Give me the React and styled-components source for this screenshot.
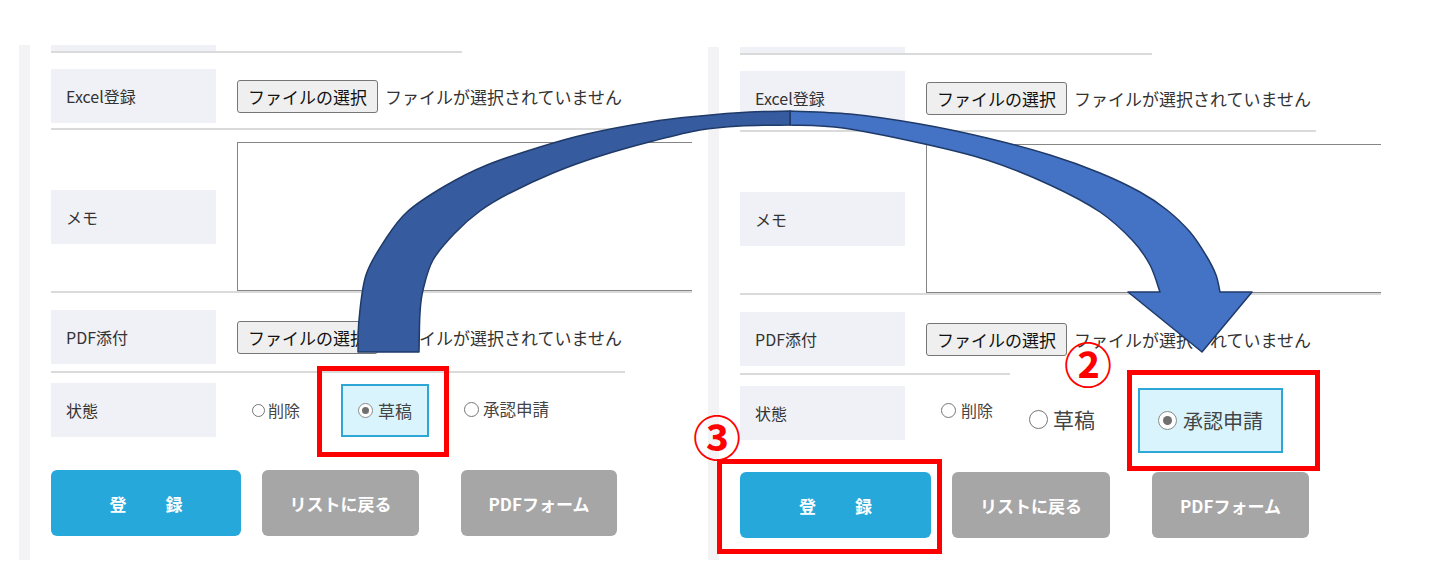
import React from 'react';
import styled, { createGlobalStyle } from 'styled-components';

const GlobalStyle = createGlobalStyle`
  html, body { margin: 0; padding: 0; background: #fff; }
  body { font-family: "Noto Sans CJK JP", "Noto Sans", sans-serif; color: #333; }
  * { box-sizing: border-box; }
`;

const Stage = styled.main`
  position: relative;
  width: 1448px;
  height: 587px;
  overflow: hidden;
  display: flex;
  align-items: flex-start;
  gap: 16px;
  padding-left: 19px;
`;

const Panel = styled.section`
  flex: none;
  width: 673px;
  height: ${p => p.$h}px;
  margin-top: ${p => p.$top}px;
  display: flex;
`;

const Strip = styled.div`
  flex: none;
  width: 11px;
  background: #f3f3f5;
`;

const Form = styled.div`
  flex: 1;
  min-width: 0;
  margin-left: 21px;
  display: flex;
  flex-direction: column;
`;

const Row = styled.div`
  display: flex;
  align-items: ${p => p.$align || 'center'};
  gap: 21px;
  padding: ${p => p.$pad || '0'};
  height: ${p => (p.$h ? `${p.$h}px` : 'auto')};
  flex: none;
`;

const Label = styled.div`
  flex: none;
  width: 165px;
  height: ${p => p.$h ?? 54}px;
  margin-top: ${p => p.$mt || 0}px;
  padding-left: 15px;
  display: flex;
  align-items: center;
  background: #f0f1f6;
  font-size: 16px;
  color: #333;
`;

const Divider = styled.div`
  flex: none;
  height: 2px;
  width: ${p => (p.$w ? `${p.$w}px` : '100%')};
  background: #dadada;
`;

const FileField = styled.div`
  flex: none;
  display: flex;
  align-items: center;
  gap: 7px;
  white-space: nowrap;
`;

const FileButton = styled.button`
  height: 33px;
  padding: 0 10px;
  border: 1px solid #767676;
  border-radius: 3px;
  background: #efefef;
  font-family: inherit;
  font-size: 17px;
  color: #111;
`;

const FileStatus = styled.span`
  font-size: 17px;
  color: #333;
`;

const Memo = styled.textarea`
  flex: 1;
  min-width: 0;
  display: block;
  margin: 0;
  height: 149px;
  border: 1px solid #858585;
  border-right: none;
  border-radius: 0;
  background: #fff;
  resize: none;
`;

const Radio = styled.span`
  flex: none;
  width: ${p => p.$size}px;
  height: ${p => p.$size}px;
  border-radius: 50%;
  border: ${p => (p.$checked ? '1.5px solid #8a8a8a' : '1px solid #767676')};
  background: #fff;
  display: inline-flex;
  align-items: center;
  justify-content: center;
  &::after {
    content: '';
    display: ${p => (p.$checked ? 'block' : 'none')};
    width: 55%;
    height: 55%;
    border-radius: 50%;
    background: #6f6f6f;
  }
`;

const Option = styled.label`
  flex: none;
  display: inline-flex;
  align-items: center;
  gap: ${p => p.$gap ?? 3}px;
  font-size: ${p => p.$fs}px;
  line-height: ${p => p.$fs + 8}px;
  color: #444;
  margin-top: ${p => p.$mt || 0}px;
  margin-left: ${p => p.$ml || 0}px;
`;

const SelectedBox = styled.div`
  position: relative;
  flex: none;
  display: flex;
  align-items: center;
  justify-content: center;
  gap: ${p => p.$gap}px;
  width: ${p => p.$w}px;
  height: ${p => p.$h}px;
  margin-top: ${p => p.$mt}px;
  margin-left: ${p => p.$ml}px;
  background: #d9f4fd;
  border: 2px solid #2ea6d6;
  font-size: ${p => p.$fs}px;
  color: #444;
  &::after {
    content: '';
    position: absolute;
    inset: ${p => p.$frame};
    border: 5px solid #ff0000;
    pointer-events: none;
  }
`;

const ButtonRow = styled.div`
  flex: none;
  display: flex;
  gap: 21px;
`;

const ActionButton = styled.button`
  position: relative;
  flex: none;
  width: ${p => p.$w}px;
  height: 66px;
  margin-left: ${p => p.$ml || 0}px;
  border: none;
  border-radius: 6px;
  background: ${p => (p.$primary ? '#27a8db' : '#a6a6a6')};
  color: #fff;
  font-family: inherit;
  font-weight: 700;
  font-size: 17px;
  display: flex;
  align-items: center;
  justify-content: center;
  gap: ${p => p.$gap || 0}px;
  &::after {
    content: '';
    display: ${p => (p.$frame ? 'block' : 'none')};
    position: absolute;
    inset: ${p => p.$frame || '0'};
    border: 5px solid #ff0000;
    pointer-events: none;
  }
`;

const Mark = styled.span`
  position: absolute;
  left: ${p => p.$x}px;
  top: ${p => p.$y}px;
  font-size: 48px;
  line-height: 1;
  font-weight: 700;
  color: #ff0000;
  pointer-events: none;
`;

const ArrowLayer = styled.svg`
  position: absolute;
  left: 0;
  top: 0;
  pointer-events: none;
`;

const crSegs = pts => {
  let d = '';
  for (let i = 0; i < pts.length - 1; i++) {
    const p0 = pts[i - 1] || pts[i];
    const p1 = pts[i];
    const p2 = pts[i + 1];
    const p3 = pts[i + 2] || p2;
    const c1x = p1[0] + (p2[0] - p0[0]) / 6;
    const c1y = p1[1] + (p2[1] - p0[1]) / 6;
    const c2x = p2[0] - (p3[0] - p1[0]) / 6;
    const c2y = p2[1] - (p3[1] - p1[1]) / 6;
    d += ` C${c1x.toFixed(1)} ${c1y.toFixed(1)} ${c2x.toFixed(1)} ${c2y.toFixed(1)} ${p2[0]} ${p2[1]}`;
  }
  return d;
};

const outerLeft = [[358, 352], [359, 320], [366, 275], [385, 240], [407, 212], [445, 186], [487, 165], [540, 147], [587, 134], [650, 122], [700, 116], [750, 112], [790, 111]];
const outerRight = [[790, 111], [850, 114], [920, 124], [987, 138], [1050, 155], [1100, 173], [1140, 192], [1167, 210], [1190, 232], [1207, 257], [1216, 275], [1220, 292]];
const innerRight = [[1160, 292], [1150, 265], [1133, 241], [1100, 212], [1050, 185], [987, 160], [920, 143], [843, 128], [790, 125]];
const innerLeft = [[790, 125], [740, 126], [700, 130], [653, 141], [600, 156], [553, 173], [510, 193], [480, 211], [455, 233], [433, 260], [423, 290], [420, 313], [419, 352]];

const darkPath = `M358 352${crSegs(outerLeft)} L790 125${crSegs(innerLeft)} Z`;
const lightPath = `M790 111${crSegs(outerRight)} L1252 292 L1202 352 L1128 292 L1160 292${crSegs(innerRight)} Z`;

function CurvedArrow() {
  return (
    <ArrowLayer width="1448" height="587" viewBox="0 0 1448 587">
      <path d={lightPath} fill="#4472c4" stroke="#1f3a68" strokeWidth="1.5" strokeLinejoin="round" />
      <path d={darkPath} fill="#365b9e" stroke="#1f3a68" strokeWidth="1.5" strokeLinejoin="round" />
    </ArrowLayer>
  );
}

function FileRow({ label, pad, divider }) {
  return (
    <>
      <Row $pad={pad}>
        <Label>{label}</Label>
        <FileField>
          <FileButton type="button">ファイルの選択</FileButton>
          <FileStatus>ファイルが選択されていません</FileStatus>
        </FileField>
      </Row>
      <Divider $w={divider} />
    </>
  );
}

function TopRows({ excelLine, topLine }) {
  return (
    <>
      <Label $h={6} />
      <Divider $w={topLine} />
      <FileRow label="Excel登録" pad="16px 0 5px" divider={excelLine} />
      <Row $pad="12px 0 0">
        <Label>メモ</Label>
        <Memo />
      </Row>
      <Divider />
    </>
  );
}

function LeftPanel() {
  return (
    <Panel $top={45} $h={515}>
      <Strip />
      <Form>
        <TopRows topLine={411} />
        <FileRow label="PDF添付" pad="17px 0 7px" divider={574} />
        <Row $align="flex-start" $h={97}>
          <Label $mt={10}>状態</Label>
          <Option $fs={16} $ml={15} $mt={25}>
            <Radio $size={13} />削除
          </Option>
          <SelectedBox $w={88} $h={53} $mt={11} $ml={20} $gap={5} $fs={17} $frame="-20px -22px -22px -26px">
            <Radio $size={15} $checked />草稿
          </SelectedBox>
          <Option $fs={16.5} $ml={14} $mt={24} $gap={4}>
            <Radio $size={15} />承認申請
          </Option>
        </Row>
        <ButtonRow>
          <ActionButton $primary $w={190} $gap={39}>
            <span>登</span>
            <span>録</span>
          </ActionButton>
          <ActionButton $w={157}>リストに戻る</ActionButton>
          <ActionButton $w={156} $ml={21}>PDFフォーム</ActionButton>
        </ButtonRow>
      </Form>
    </Panel>
  );
}

function RightPanel() {
  return (
    <Panel $top={47} $h={513}>
      <Strip />
      <Form>
        <TopRows topLine={412} excelLine={576} />
        <FileRow label="PDF添付" pad="17px 0 7px" divider={270} />
        <Row $align="flex-start" $h={97}>
          <Label $mt={11}>状態</Label>
          <Option $fs={16} $ml={15} $mt={23} $gap={5}>
            <Radio $size={15} />削除
          </Option>
          <Option $fs={21} $ml={15} $mt={30} $gap={5}>
            <Radio $size={19} />草稿
          </Option>
          <SelectedBox $w={145} $h={65} $mt={13} $ml={22} $gap={6} $fs={20} $frame="-20px -39px -20px -13px">
            <Radio $size={19} $checked />承認申請
            <Mark $x={-76} $y={-52}>②</Mark>
          </SelectedBox>
        </Row>
        <ButtonRow>
          <ActionButton $primary $w={191} $gap={39} $frame="-13px -11px -16px -23px">
            <span>登</span>
            <span>録</span>
            <Mark $x={-47} $y={-61}>③</Mark>
          </ActionButton>
          <ActionButton $w={158}>リストに戻る</ActionButton>
          <ActionButton $w={157} $ml={21}>PDFフォーム</ActionButton>
        </ButtonRow>
      </Form>
    </Panel>
  );
}

export default function App() {
  return (
    <>
      <GlobalStyle />
      <Stage>
        <LeftPanel />
        <RightPanel />
        <CurvedArrow />
      </Stage>
    </>
  );
}
